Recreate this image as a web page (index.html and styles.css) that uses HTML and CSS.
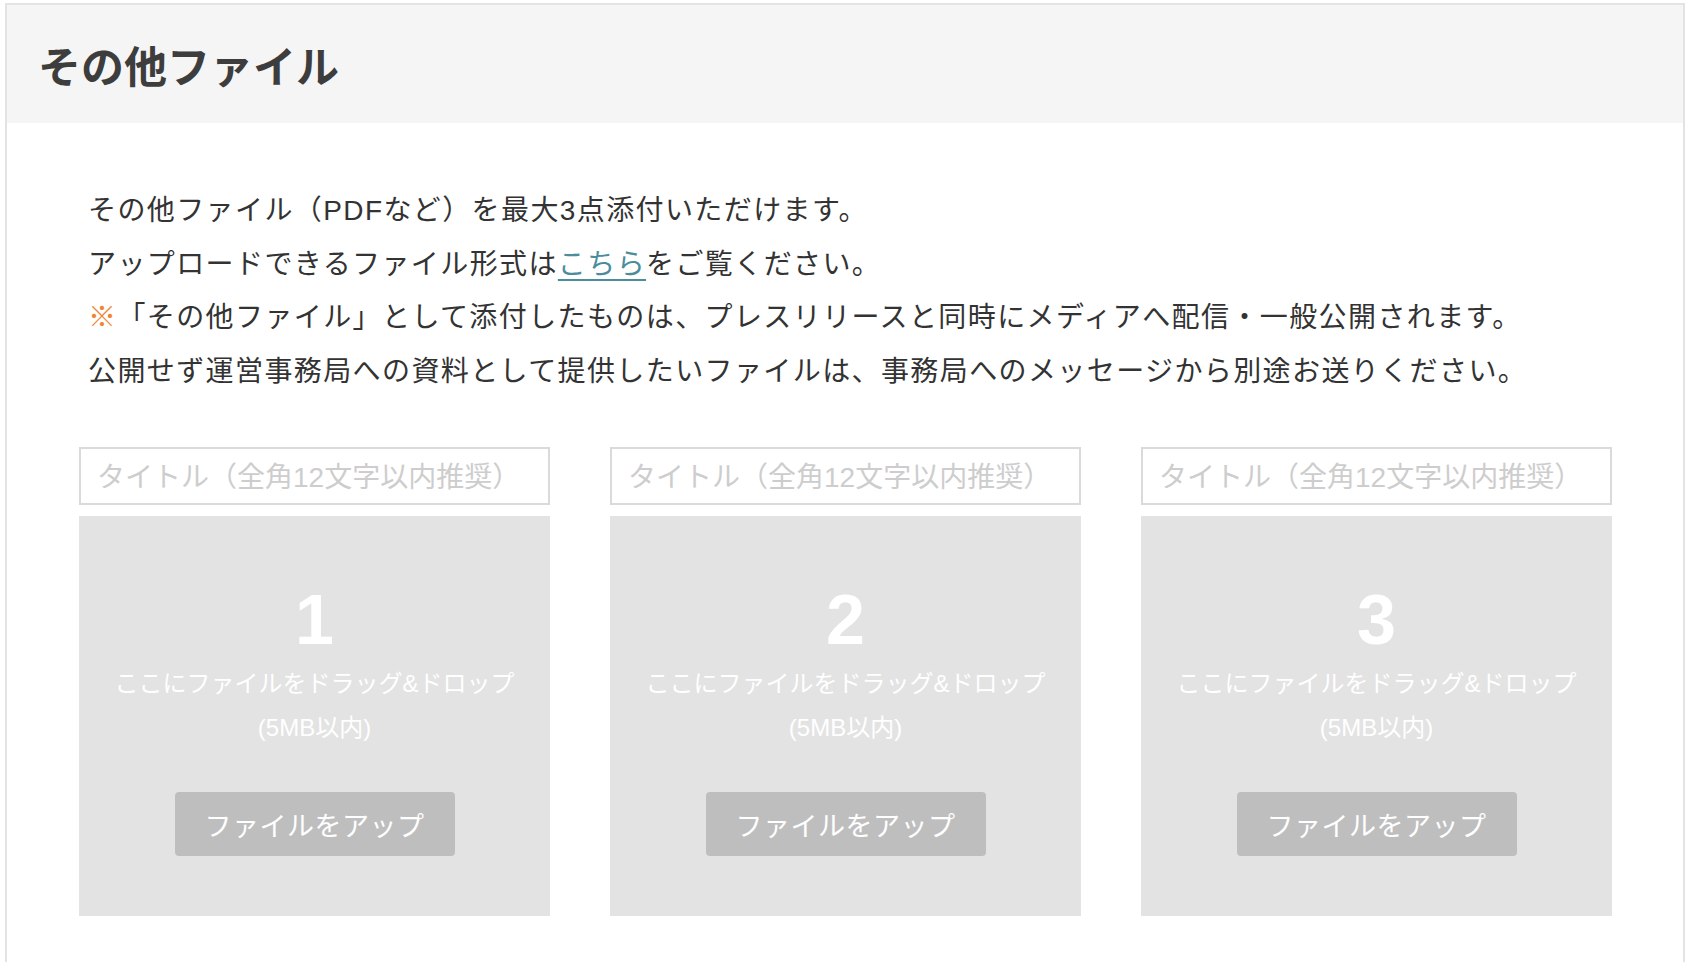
FILE: index.html
```html
<!DOCTYPE html>
<html lang="ja">
<head>
    <meta charset="UTF-8">
    <meta name="viewport" content="width=device-width, initial-scale=1.0">
    <title>その他ファイル</title>
    <link rel="stylesheet" href="styles.css">
</head>
<body>

<div class="panel">
    <div class="panel-header">
        <h2>その他ファイル</h2>
    </div>

    <div class="panel-body">
        <div class="notes">
            <p>その他ファイル（PDFなど）を最大3点添付いただけます。</p>
            <p>アップロードできるファイル形式は<a href="#">こちら</a>をご覧ください。</p>
            <p><span class="mark">※</span>「その他ファイル」として添付したものは、プレスリリースと同時にメディアへ配信・一般公開されます。</p>
            <p>公開せず運営事務局への資料として提供したいファイルは、事務局へのメッセージから別途お送りください。</p>
        </div>

        <div class="uploads">
            <div class="upload">
                <input type="text" class="upload-title" placeholder="タイトル（全角12文字以内推奨）">
                <div class="dropzone">
                    <div class="dropzone-num">1</div>
                    <p>ここにファイルをドラッグ&amp;ドロップ<br>(5MB以内)</p>
                    <button type="button" class="upload-btn">ファイルをアップ</button>
                </div>
            </div>

            <div class="upload">
                <input type="text" class="upload-title" placeholder="タイトル（全角12文字以内推奨）">
                <div class="dropzone">
                    <div class="dropzone-num">2</div>
                    <p>ここにファイルをドラッグ&amp;ドロップ<br>(5MB以内)</p>
                    <button type="button" class="upload-btn">ファイルをアップ</button>
                </div>
            </div>

            <div class="upload">
                <input type="text" class="upload-title" placeholder="タイトル（全角12文字以内推奨）">
                <div class="dropzone">
                    <div class="dropzone-num">3</div>
                    <p>ここにファイルをドラッグ&amp;ドロップ<br>(5MB以内)</p>
                    <button type="button" class="upload-btn">ファイルをアップ</button>
                </div>
            </div>
        </div>
    </div>
</div>

</body>
</html>
```

FILE: styles.css
```css
body {
    font-family: "Liberation Sans", "Noto Sans CJK JP", sans-serif;
    background-color: #fff;
    color: #333;
    margin: 0;
    padding: 0;
}

.panel {
    margin: 3px 3px 0 5px;
    border: 2px solid #e3e3e3;
    border-bottom: none;
}

.panel-header {
    background-color: #f5f5f5;
    height: 118px;
    display: flex;
    align-items: center;
    padding: 0 31px;
}

.panel-header h2 {
    margin: 0;
    font-size: 43px;
    font-weight: 700;
    color: #3d3d3d;
}

.panel-body {
    padding: 61px 71px 60px 72px;
}

.notes {
    padding-left: 9px;
}

.notes p {
    margin: 0;
    font-size: 28px;
    line-height: 53.5px;
    letter-spacing: 1.4px;
}

.notes a {
    color: #4b8d9d;
    text-decoration: underline;
    text-underline-offset: 5px;
    text-decoration-thickness: 2px;
}

.mark {
    color: #f08634;
}

.uploads {
    display: grid;
    grid-template-columns: repeat(3, 1fr);
    gap: 60px;
    margin-top: 49px;
}

.upload-title {
    display: block;
    box-sizing: border-box;
    width: 100%;
    height: 58px;
    margin: 0 0 11px;
    padding: 4px 16px 0;
    border: 2px solid #dadada;
    border-radius: 0;
    font-family: "Liberation Sans", "Noto Sans CJK JP", sans-serif;
    font-size: 28px;
    color: #333;
    outline: none;
}

.upload-title::placeholder {
    color: #cdcdcd;
}

.dropzone {
    background-color: #e3e3e3;
    height: 400px;
    box-sizing: border-box;
    padding-top: 62px;
    text-align: center;
    color: #fff;
}

.dropzone-num {
    font-size: 70px;
    font-weight: 700;
    line-height: 84px;
}

.dropzone p {
    margin: 0;
    font-size: 24px;
    line-height: 44px;
}

.upload-btn {
    margin-top: 42px;
    width: 280px;
    height: 64px;
    background-color: #bebebe;
    color: #fff;
    border: none;
    border-radius: 4px;
    font-family: "Liberation Sans", "Noto Sans CJK JP", sans-serif;
    font-size: 27px;
    letter-spacing: 0.5px;
    cursor: pointer;
}
```
